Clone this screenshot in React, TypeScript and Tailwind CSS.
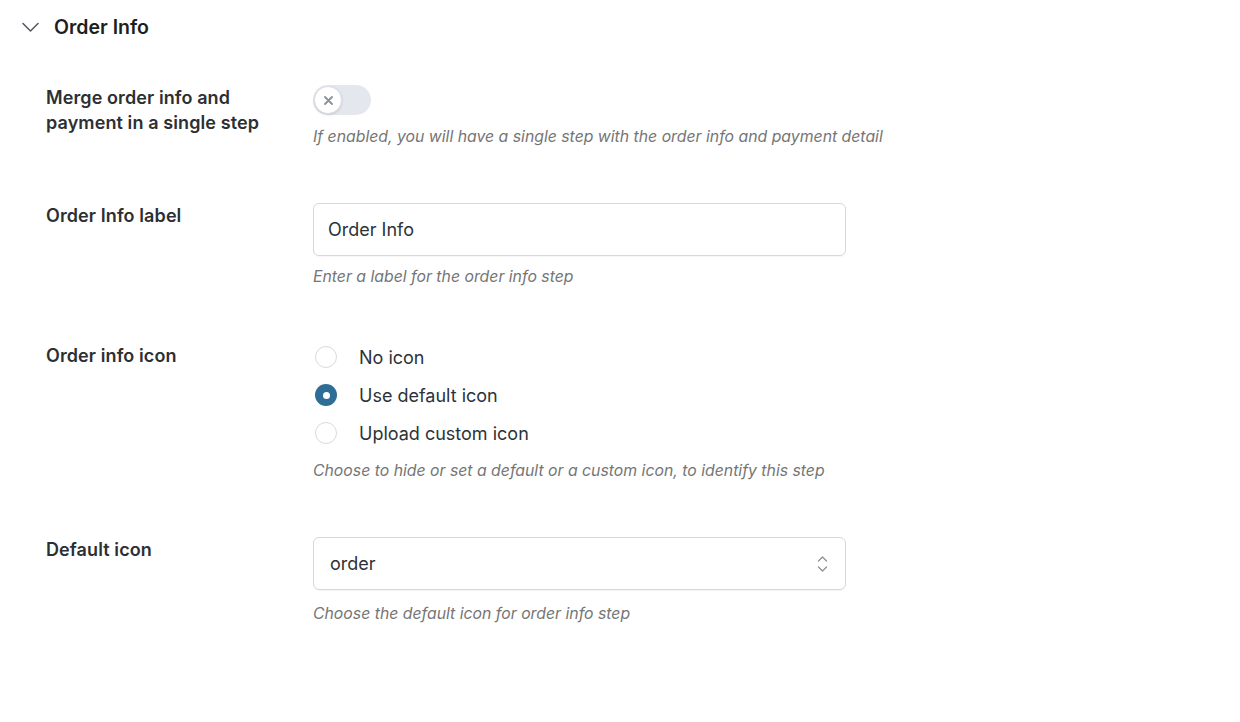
import { useState } from "react";

const font = { fontFamily: "Inter, 'Noto Sans', sans-serif" };

function Help({ children }: { children: React.ReactNode }) {
  return <p className="text-[15.8px] leading-6 italic text-[#757575]">{children}</p>;
}

function Row({ label, children }: { label: React.ReactNode; children: React.ReactNode }) {
  return (
    <div className="flex">
      <div className="w-[267px] shrink-0 pr-4 text-[18px] leading-[25px] font-semibold tracking-[0.1px] text-[#2c2f33]">
        {label}
      </div>
      <div className="flex flex-col">{children}</div>
    </div>
  );
}

const options = ["No icon", "Use default icon", "Upload custom icon"];

export default function App() {
  const [icon, setIcon] = useState(1);

  return (
    <div className="min-h-[722px] w-[1240px] bg-white" style={font}>
      <div className="flex items-center gap-[15px] pl-[22px] pt-[14px]">
        <svg width="17" height="10" viewBox="0 0 17 10" fill="none" stroke="#50575e" strokeWidth="1.5" strokeLinecap="round" strokeLinejoin="round">
          <path d="M1 1.5l7.5 7.5L16 1.5" />
        </svg>
        <h2 className="text-[19.5px] leading-[26px] font-semibold text-[#1e1e1e]">Order Info</h2>
      </div>

      <div className="flex flex-col gap-[54px] pl-[46px] pt-[45px]">
        <Row label={<>Merge order info and<br />payment in a single step</>}>
          <button className="flex h-[30px] w-[58px] items-center rounded-full bg-[#e4e8ee] p-[1px]">
            <span className="flex h-[28px] w-[28px] items-center justify-center rounded-full border border-[#dcdfe3] bg-white shadow-sm">
              <svg width="9" height="9" viewBox="0 0 9 9" stroke="#8a9099" strokeWidth="1.8" strokeLinecap="round">
                <path d="M1 1l7 7M8 1l-7 7" />
              </svg>
            </span>
          </button>
          <div className="mt-[10px]">
            <Help>If enabled, you will have a single step with the order info and payment detail</Help>
          </div>
        </Row>

        <Row label="Order Info label">
          <input
            defaultValue="Order Info"
            className="h-[53px] w-[533px] rounded-md border border-[#d4d8dd] px-[14px] text-[18px] text-[#2c3338] shadow-[0_1px_1px_rgba(0,0,0,0.04)] outline-none"
          />
          <div className="mt-[9px]">
            <Help>Enter a label for the order info step</Help>
          </div>
        </Row>

        <Row label="Order info icon">
          <div className="flex flex-col gap-[10px]">
            {options.map((o, i) => (
              <label key={o} className="flex h-[28px] cursor-pointer items-center gap-[22px]" onClick={() => setIcon(i)}>
                {icon === i ? (
                  <span className="ml-[2px] flex h-[22px] w-[22px] items-center justify-center rounded-full bg-[#2e6e96]">
                    <span className="h-[7px] w-[7px] rounded-full bg-white" />
                  </span>
                ) : (
                  <span className="ml-[2px] h-[22px] w-[22px] rounded-full border border-[#d7dade] bg-white" />
                )}
                <span className="text-[18px] text-[#2c3338]">{o}</span>
              </label>
            ))}
          </div>
          <div className="mt-[12px]">
            <Help>Choose to hide or set a default or a custom icon, to identify this step</Help>
          </div>
        </Row>

        <Row label="Default icon">
          <div className="flex h-[53px] w-[533px] items-center justify-between rounded-md border border-[#d4d8dd] pl-[16px] pr-[17px] shadow-[0_1px_1px_rgba(0,0,0,0.04)]">
            <span className="text-[18px] text-[#2c3338]">order</span>
            <svg width="11" height="18" viewBox="0 0 11 18" fill="none" stroke="#8c9096" strokeWidth="1.3" strokeLinecap="round" strokeLinejoin="round">
              <path d="M1.5 6l4-4 4 4M1.5 12l4 4 4-4" />
            </svg>
          </div>
          <div className="mt-[12px]">
            <Help>Choose the default icon for order info step</Help>
          </div>
        </Row>
      </div>
    </div>
  );
}
